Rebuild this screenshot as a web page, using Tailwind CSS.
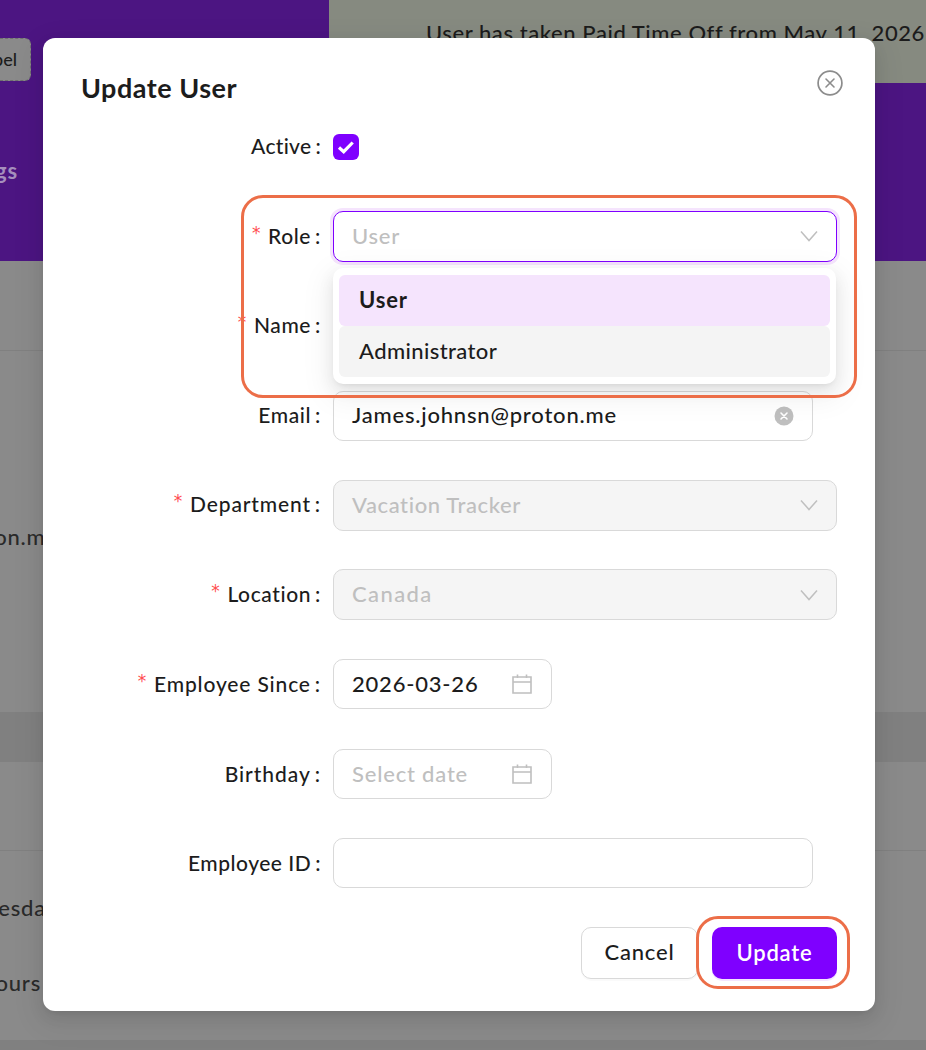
<!DOCTYPE html>
<html lang="en">
<head>
  <meta charset="utf-8">
  <title>Update User</title>
  <script src="https://cdn.jsdelivr.net/npm/@tailwindcss/browser@4"></script>
</head>
<body class="relative w-[926px] h-[1050px] overflow-hidden bg-[#8a8a8a] font-['Lato',sans-serif] font-medium text-[22px] tracking-[0.8px] text-[#1c1c1c]">
  <!-- Page behind the backdrop -->
  <div class="flex flex-col h-full">
    <div class="flex h-[261px] bg-[#4c1582]">
      <div class="w-[329px] flex flex-col items-start">
        <div class="mt-[38px] w-[31px] h-[43px] pr-[13px] flex justify-end items-center overflow-hidden bg-[#8a8a8a] rounded-r-md border border-l-0 border-dashed border-[#6f6f6f] text-[18px] tracking-normal">
          <span class="whitespace-nowrap">Label</span>
        </div>
        <div class="mt-[73px] w-[18px] flex justify-end overflow-hidden font-bold text-[#a58fbd]">
          <span class="whitespace-nowrap">Settings</span>
        </div>
      </div>
      <div class="flex-1 h-[83px] bg-[#868a80] pl-[97px] pt-[16px] tracking-[0.58px] whitespace-nowrap overflow-hidden">User has taken Paid Time Off from May 11, 2026</div>
    </div>
    <div class="h-[90px] border-b border-[#808080]"></div>
    <div class="h-[361px]">
      <div class="mt-[169px] w-[58px] flex justify-end text-[#2a2a2a]"><span class="whitespace-nowrap">proton.me</span></div>
    </div>
    <div class="h-[50px] bg-[#808080]"></div>
    <div class="h-[89px] border-b border-[#808080]"></div>
    <div class="h-[189px]">
      <div class="mt-[40px] w-[58px] flex justify-end text-[#2a2a2a]"><span class="whitespace-nowrap">Wednesday</span></div>
      <div class="mt-[42px] w-[41px] flex justify-end text-[#2a2a2a]"><span class="whitespace-nowrap">hours</span></div>
    </div>
    <div class="flex-1 bg-[#808080]"></div>
  </div>

  <!-- Modal -->
  <div class="absolute left-[43px] top-[38px] w-[832px] h-[973px] bg-white rounded-xl shadow-[0_6px_16px_rgba(0,0,0,0.08),0_3px_6px_-4px_rgba(0,0,0,0.12),0_9px_28px_8px_rgba(0,0,0,0.05)]">
    <div class="flex justify-between items-start pl-[38px] pr-[32px] pt-[33px] h-[83.6px]">
      <h2 class="text-[27px] leading-[34px] tracking-[0.5px] font-bold">Update User</h2>
      <svg class="w-[26px] h-[26px] mt-[-1px]" viewBox="0 0 26 26" fill="none" stroke="#8c8c8c">
        <circle cx="13" cy="13" r="11.9" stroke-width="1.7"/>
        <path d="M9 9l8 8M17 9l-8 8" stroke-width="1.6" stroke-linecap="round"/>
      </svg>
    </div>

    <form class="flex flex-col gap-[39.2px]">
      <div class="flex items-center h-[50.4px] gap-3">
        <label class="w-[278px] pb-[2px] text-right text-[21px] tracking-[0.3px]">Active<span class="ml-1">:</span></label>
        <span class="w-[26px] h-[26px] rounded-md bg-[#7f00ff] flex items-center justify-center">
          <svg class="w-[18px] h-[18px]" viewBox="0 0 18 18" fill="none" stroke="white" stroke-width="3.2"><path d="M2 9.5l4.7 4.2 9-9.2"/></svg>
        </span>
      </div>

      <div class="flex items-center h-[50.4px] gap-3">
        <label class="w-[278px] pb-[2px] text-right text-[21px] tracking-[0.6px]"><span class="font-['DejaVu_Sans'] text-[17px] text-[#ff4d4f] mr-[7px] relative top-[-5px]">*</span>Role<span class="ml-1">:</span></label>
        <div class="flex items-center justify-between w-[504px] h-[51px] px-[18px] rounded-[10px] bg-white border border-[#7f00ff] shadow-[0_0_0_3px_#f5e4fd] text-[#bfbfbf]">
          <span class="pb-[2px]">User</span>
          <svg class="w-[18px] h-[12px]" viewBox="0 0 18 12" fill="none" stroke="#bfbfbf" stroke-width="1.5"><path d="M1 1.5l8 9 8-9"/></svg>
        </div>
      </div>

      <div class="flex items-center h-[50.4px] gap-3">
        <label class="w-[278px] pb-[2px] text-right text-[21px] tracking-[0.6px]"><span class="font-['DejaVu_Sans'] text-[17px] text-[#ff4d4f] mr-[7px] relative top-[-5px]">*</span>Name<span class="ml-1">:</span></label>
        <div class="w-[480px] h-[50px] rounded-[10px] border border-[#d9d9d9]"></div>
      </div>

      <div class="flex items-center h-[50.4px] gap-3">
        <label class="w-[278px] pb-[2px] text-right text-[21px] tracking-[0.6px]">Email<span class="ml-1">:</span></label>
        <div class="flex items-center justify-between w-[480px] h-[50px] pl-[18px] pr-[18px] rounded-[10px] border border-[#d9d9d9]">
          <span class="pb-[2px]">James.johnsn@proton.me</span>
          <svg class="w-[20px] h-[20px]" viewBox="0 0 20 20" fill="none"><circle cx="10" cy="10" r="9.5" fill="#bfbfbf"/><path d="M7 7l6 6M13 7l-6 6" stroke="white" stroke-width="1.6" stroke-linecap="round"/></svg>
        </div>
      </div>

      <div class="flex items-center h-[50.4px] gap-3">
        <label class="w-[278px] pb-[2px] text-right text-[21px] tracking-[0.85px]"><span class="font-['DejaVu_Sans'] text-[17px] text-[#ff4d4f] mr-[7px] relative top-[-5px]">*</span>Department<span class="ml-1">:</span></label>
        <div class="flex items-center justify-between w-[504px] h-[51px] px-[18px] rounded-[10px] bg-[#f5f5f5] border border-[#d9d9d9] text-[#bfbfbf]">
          <span class="pb-[2px] tracking-[0.6px]">Vacation Tracker</span>
          <svg class="w-[18px] h-[12px]" viewBox="0 0 18 12" fill="none" stroke="#bfbfbf" stroke-width="1.5"><path d="M1 1.5l8 9 8-9"/></svg>
        </div>
      </div>

      <div class="flex items-center h-[50.4px] gap-3">
        <label class="w-[278px] pb-[2px] text-right text-[21px] tracking-[0.6px]"><span class="font-['DejaVu_Sans'] text-[17px] text-[#ff4d4f] mr-[7px] relative top-[-5px]">*</span>Location<span class="ml-1">:</span></label>
        <div class="flex items-center justify-between w-[504px] h-[51px] px-[18px] rounded-[10px] bg-[#f5f5f5] border border-[#d9d9d9] text-[#bfbfbf]">
          <span class="pb-[2px] tracking-[1.4px]">Canada</span>
          <svg class="w-[18px] h-[12px]" viewBox="0 0 18 12" fill="none" stroke="#bfbfbf" stroke-width="1.5"><path d="M1 1.5l8 9 8-9"/></svg>
        </div>
      </div>

      <div class="flex items-center h-[50.4px] gap-3">
        <label class="w-[278px] pb-[2px] text-right text-[21px] tracking-[0.85px]"><span class="font-['DejaVu_Sans'] text-[17px] text-[#ff4d4f] mr-[7px] relative top-[-5px]">*</span>Employee Since<span class="ml-1">:</span></label>
        <div class="flex items-center justify-between w-[219px] h-[50px] pl-[18px] pr-[18px] rounded-[10px] border border-[#d9d9d9]">
          <span class="pb-[2px]">2026-03-26</span>
          <svg class="w-[22px] h-[22px]" viewBox="0 0 22 22" fill="none" stroke="#bfbfbf" stroke-width="1.6"><path d="M2 4h18v16H2zM2 9h18M6.5 1.5V5M15.5 1.5V5"/></svg>
        </div>
      </div>

      <div class="flex items-center h-[50.4px] gap-3">
        <label class="w-[278px] text-right text-[21px] tracking-[0.95px]">Birthday<span class="ml-1">:</span></label>
        <div class="flex items-center justify-between w-[219px] h-[50px] pl-[18px] pr-[18px] rounded-[10px] border border-[#d9d9d9] text-[#bfbfbf]">
          <span>Select date</span>
          <svg class="w-[22px] h-[22px]" viewBox="0 0 22 22" fill="none" stroke="#bfbfbf" stroke-width="1.6"><path d="M2 4h18v16H2zM2 9h18M6.5 1.5V5M15.5 1.5V5"/></svg>
        </div>
      </div>

      <div class="flex items-center h-[50.4px] gap-3 mt-[-0.4px]">
        <label class="w-[278px] text-right text-[21px] tracking-[0.5px]">Employee ID<span class="ml-1">:</span></label>
        <div class="w-[480px] h-[50px] rounded-[10px] border border-[#d9d9d9]"></div>
      </div>
    </form>

    <div class="flex justify-end gap-[14px] pr-[38px] mt-[38.6px]">
      <button class="w-[117px] h-[52px] pb-[2px] rounded-[10px] bg-white border border-[#d9d9d9] shadow-[0_2px_0_rgba(0,0,0,0.02)]">Cancel</button>
      <button class="w-[125px] h-[52px] pb-[1px] rounded-[10px] bg-[#7f00ff] text-white font-semibold shadow-[0_2px_0_#f3e6ff]">Update</button>
    </div>
  </div>

  <!-- Role dropdown -->
  <div class="absolute left-[333px] top-[268px] w-[503px] h-[116px] p-[6px] pt-[7px] flex flex-col bg-white rounded-[10px] shadow-[0_6px_16px_rgba(0,0,0,0.08),0_3px_6px_-4px_rgba(0,0,0,0.12),0_9px_28px_8px_rgba(0,0,0,0.05)]">
    <div class="h-[51px] shrink-0 flex items-center px-[20px] pb-[2px] rounded-md bg-[#f5e4fd] font-bold">User</div>
    <div class="h-[51px] shrink-0 flex items-center px-[20px] pb-[2px] rounded-md bg-[#f4f4f4] tracking-[0.4px]">Administrator</div>
  </div>

  <!-- Annotation outlines -->
  <div class="absolute left-[241px] top-[195px] w-[616px] h-[203px] rounded-[22px] border-[3px] border-[#ec6e48]"></div>
  <div class="absolute left-[696px] top-[916px] w-[154px] h-[73px] rounded-[22px] border-[3px] border-[#ec6e48]"></div>
</body>
</html>
